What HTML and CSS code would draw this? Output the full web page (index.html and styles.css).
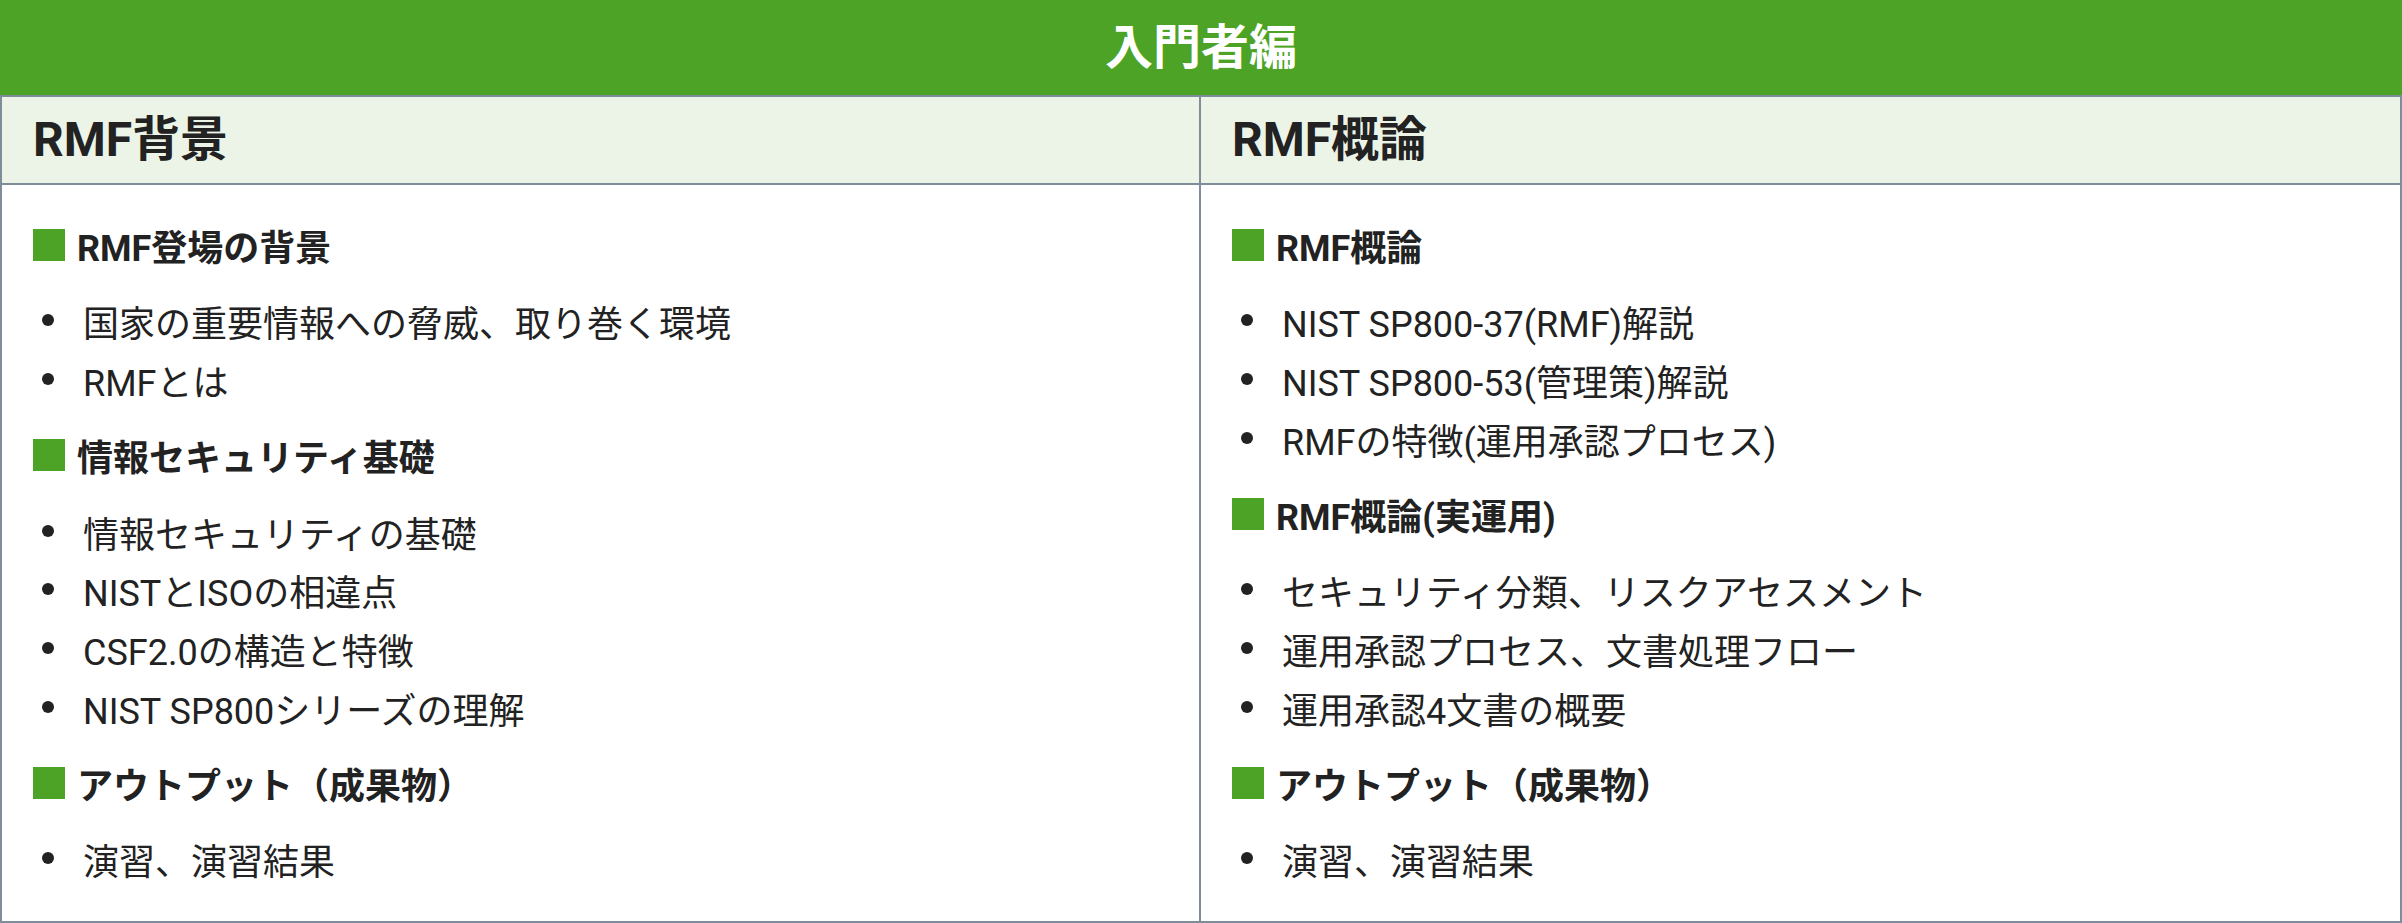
FILE: index.html
```html
<!DOCTYPE html>
<html lang="ja">
<head>
<meta charset="utf-8">
<title>入門者編</title>
<link rel="stylesheet" href="styles.css">
</head>
<body>
<div class="course">
  <div class="course-title">入門者編</div>
  <div class="course-grid">
    <div class="col-head col-left">RMF背景</div>
    <div class="col-head">RMF概論</div>
    <div class="col-body col-left">
      <h3 class="sec"><span class="sq"></span>RMF登場の背景</h3>
      <ul class="items">
        <li>国家の重要情報への脅威、取り巻く環境</li>
        <li>RMFとは</li>
      </ul>
      <h3 class="sec"><span class="sq"></span>情報セキュリティ基礎</h3>
      <ul class="items">
        <li>情報セキュリティの基礎</li>
        <li>NISTとISOの相違点</li>
        <li>CSF2.0の構造と特徴</li>
        <li>NIST SP800シリーズの理解</li>
      </ul>
      <h3 class="sec"><span class="sq"></span>アウトプット（成果物）</h3>
      <ul class="items">
        <li>演習、演習結果</li>
      </ul>
    </div>
    <div class="col-body">
      <h3 class="sec"><span class="sq"></span>RMF概論</h3>
      <ul class="items">
        <li>NIST SP800-37(RMF)解説</li>
        <li>NIST SP800-53(管理策)解説</li>
        <li>RMFの特徴(運用承認プロセス)</li>
      </ul>
      <h3 class="sec"><span class="sq"></span>RMF概論(実運用)</h3>
      <ul class="items">
        <li>セキュリティ分類、リスクアセスメント</li>
        <li>運用承認プロセス、文書処理フロー</li>
        <li>運用承認4文書の概要</li>
      </ul>
      <h3 class="sec"><span class="sq"></span>アウトプット（成果物）</h3>
      <ul class="items">
        <li>演習、演習結果</li>
      </ul>
    </div>
  </div>
</div>
</body>
</html>
```

FILE: styles.css
```css
* { box-sizing: border-box; }
html, body { margin: 0; padding: 0; background: #ffffff; }
body {
  font-family: Roboto, "Noto Sans CJK JP", sans-serif;
  color: #222222;
}
.course { width: 2402px; }
.course-title {
  height: 95px;
  line-height: 95px;
  background: #4ca325;
  color: #ffffff;
  font-size: 48px;
  font-weight: 700;
  text-align: center;
}
.course-grid {
  display: grid;
  grid-template-columns: 1fr 1fr;
  border: 2px solid #7f8d9a;
}
.col-left { border-right: 2px solid #7f8d9a; }
.col-head {
  height: 88px;
  line-height: 86px;
  background: #ecf4e8;
  border-bottom: 2px solid #7f8d9a;
  padding-left: 31px;
  font-size: 48px;
  font-weight: 700;
}
.col-body {
  height: 736px;
  padding: 33px 31px 0;
}
.sec {
  display: flex;
  align-items: center;
  margin: 19px 0 20px;
  height: 54px;
  font-size: 36px;
  font-weight: 700;
}
.sec:first-child { margin-top: 0; }
.sq {
  width: 32px;
  height: 32px;
  background: #4ca325;
  margin-right: 12px;
  flex: none;
}
.items {
  list-style: none;
  margin: 0;
  padding: 0;
}
.items li {
  display: flex;
  align-items: center;
  height: 58.7px;
  font-size: 36px;
}
.items li::before {
  content: "";
  flex: none;
  width: 12px;
  height: 12px;
  border-radius: 50%;
  background: #222222;
  margin: 0 29px 2px 9px;
}
```
